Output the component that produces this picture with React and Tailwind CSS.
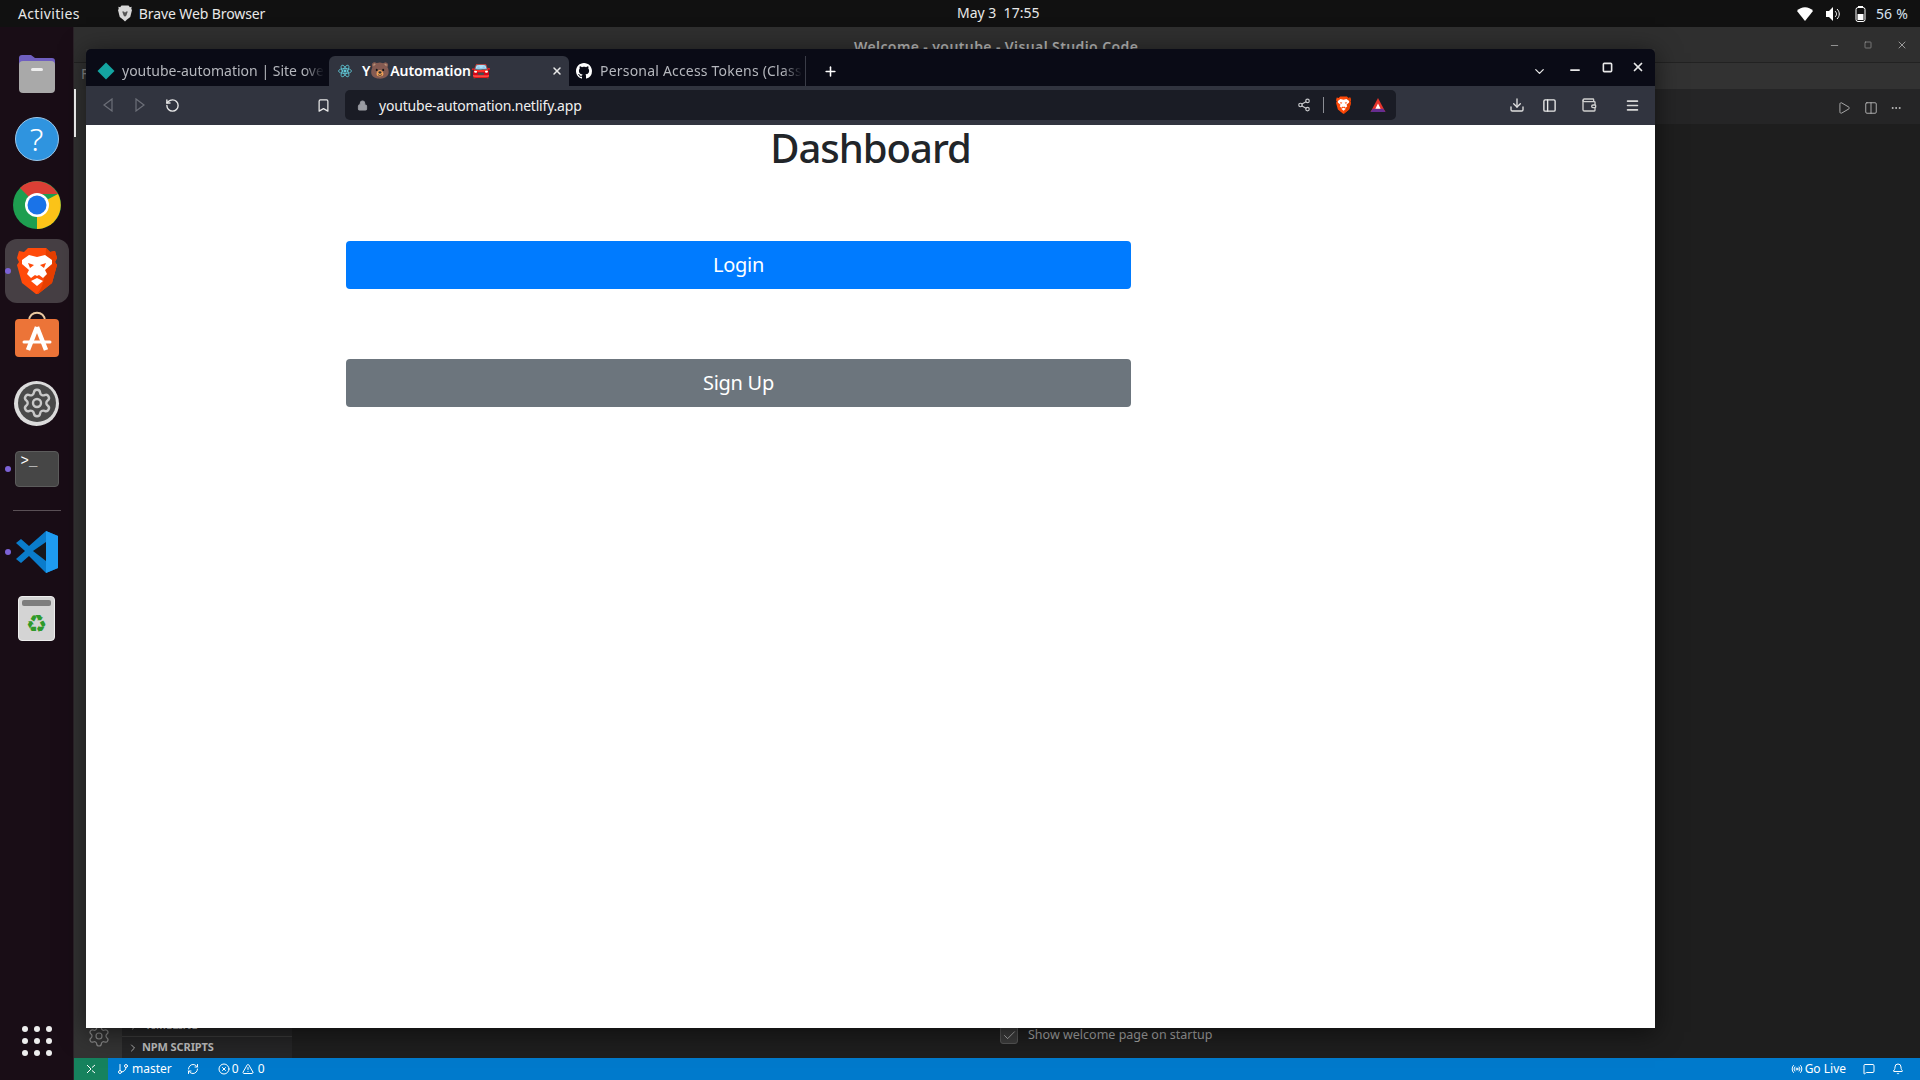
import React from "react";
import { ChevronDown, ChevronRight, Plus, X, Minus, Square, RotateCw, Bookmark, Lock, Share2, Download, PanelLeft, Wallet, Menu, Play, Columns2, Ellipsis, Settings, GitBranch, RefreshCw, CircleX, TriangleAlert, Radio, Bell, Check, MessageSquare } from "lucide-react";

const ui = "font-['Noto_Sans',sans-serif]";

function Folder() {
  return (
    <svg width="38" height="42" viewBox="0 0 38 42">
      <path d="M1 6a3 3 0 0 1 3-3h9l4 3h17a3 3 0 0 1 3 3v8H1z" fill="#6f5fc0" />
      <rect x="1" y="9" width="36" height="32" rx="4" fill="#a9a9a9" />
      <rect x="13" y="16" width="12" height="3" rx="1.5" fill="#eee" />
    </svg>
  );
}
function Help() {
  return (
    <div className="w-[44px] h-[44px] rounded-full bg-[#2f94df] flex items-center justify-center border border-[#9cc9ec] text-white text-[32px] font-['Noto_Sans',sans-serif] font-light leading-none">?</div>
  );
}
function Chrome() {
  return (
    <svg width="48" height="48" viewBox="0 0 48 48">
      <circle cx="24" cy="24" r="24" fill="#1e9e50" />
      <path d="M24 24 7 7A24 24 0 0 1 45 13H24z" fill="#db3f35" />
      <path d="M24 24h0L45 13A24 24 0 0 1 24 48z" fill="#fcc419" />
      <path d="M24 48 34 30 24 24z" fill="#fcc419" />
      <circle cx="24" cy="24" r="12" fill="#fff" />
      <circle cx="24" cy="24" r="9.5" fill="#1a73e8" />
    </svg>
  );
}
function BraveLion({ w = 40, h = 48 }) {
  return (
    <svg width={w} height={h} viewBox="0 0 40 48">
      <path d="M11 1H29L33 5 38 4 40 11 38 15 40 18 35 36 21 47H19L5 36 0 18 2 15 0 11 2 4 7 5Z" fill="#ff4a0a" />
      <path d="M29 1 33 5 38 4 40 11 38 15 40 18 35 36 21 47 H20 C30 36 28 20 29 1Z" fill="#e63f00" />
      <path d="M5 13 12 8 20 10 28 8 35 13 35 17 28 23 30 27 26 31 22 28 20 29 18 28 14 31 10 27 12 23 5 17Z" fill="#fff" />
      <path d="M11 16 17 18 13 21ZM29 16 23 18 27 21Z" fill="#ff4a0a" />
      <path d="M14 34 20 31 26 34 20 39Z" fill="#fff" />
    </svg>
  );
}
function Store() {
  return (
    <svg width="44" height="48" viewBox="0 0 44 48" className="-mt-[4px]">
      <path d="M14 10c0-11 16-11 16 0" fill="none" stroke="#e9c9a0" strokeWidth="2" />
      <rect x="0" y="8" width="44" height="38" rx="4" fill="#ec7438" />
      <path d="M22 16 13 39M22 16l9 23" stroke="#fff" strokeWidth="4.5" fill="none" />
      <path d="M9 31h26" stroke="#fff" strokeWidth="3" strokeLinecap="round" />
    </svg>
  );
}
function Gear() {
  return (
    <div className="w-[45px] h-[45px] rounded-full bg-[#dcdcdc] flex items-center justify-center">
      <div className="w-[38px] h-[38px] rounded-full bg-[#4a4a4a] flex items-center justify-center">
        <Settings size={32} color="#c9c9c9" strokeWidth={1.8} />
      </div>
    </div>
  );
}
function Terminal() {
  return (
    <div className="w-[44px] h-[36px] rounded-[4px] bg-[#464646] border border-[#5c5c5c] pl-[5px] pt-[1px] text-white text-[14px] leading-[16px] font-['Liberation_Mono',monospace]">&gt;_</div>
  );
}
function VSCode() {
  return (
    <svg width="42" height="42" viewBox="0 0 42 42">
      <path d="M30 0 42 5v32l-12 5L13 25 5 32 0 28l9-8-9-8 5-4 8 7z" fill="#0a7ccb" />
      <path d="M30 0 42 5v32l-12 5z" fill="#1f9cf0" />
      <path d="M30 11 17 20l13 10z" fill="#16171b" />
    </svg>
  );
}
function Trash() {
  return (
    <div className="w-[37px] h-[45px] rounded-[4px] bg-[#d4d4d4] border border-[#eee] flex flex-col items-center px-[3px] pt-[3px]">
      <div className="w-full h-[6px] rounded-[2px] bg-[#7d7d7d]" />
      <div className="mt-[6px] text-[#2f9a2a] text-[24px] leading-none font-['DejaVu_Sans',sans-serif]">♻</div>
    </div>
  );
}

function DockItem({ children, h, dot, active, className = "" }) {
  return (
    <div className={`relative w-[74px] flex items-center justify-center ${className}`} style={{ height: h }}>
      {dot && <span className="absolute left-[5px] top-1/2 -mt-[3px] w-[6px] h-[6px] rounded-full bg-[#7c62d6]" />}
      {active ? (
        <div className="w-[64px] h-[64px] rounded-[12px] bg-[#463f44] flex items-center justify-center">{children}</div>
      ) : children}
    </div>
  );
}

function Dock() {
  return (
    <div className="w-[74px] shrink-0 bg-[#190d16] flex flex-col items-center border-r border-[#2a2228] pt-[13px]">
      <DockItem h={66}><Folder /></DockItem>
      <DockItem h={66}><Help /></DockItem>
      <DockItem h={66}><Chrome /></DockItem>
      <DockItem h={66} dot active><BraveLion /></DockItem>
      <DockItem h={66}><Store /></DockItem>
      <DockItem h={66}><Gear /></DockItem>
      <DockItem h={66} dot><Terminal /></DockItem>
      <div className="w-[48px] h-px bg-[#5a5056] mt-[8px] mb-[8px]" />
      <DockItem h={66} dot><VSCode /></DockItem>
      <DockItem h={66}><Trash /></DockItem>
      <div className="flex-1" />
      <div className="grid grid-cols-3 gap-[6px] pb-[24px]">
        {Array.from({ length: 9 }).map((_, i) => (
          <span key={i} className="w-[6px] h-[6px] rounded-full bg-[#eeeeee]" />
        ))}
      </div>
    </div>
  );
}

function BraveMini() {
  return (
    <svg width="14" height="17" viewBox="0 0 40 48" className="block"><path d="M10 1h20l4 5 5-1-1 6 2 3-5 20-10 8-5 5-5-5-10-8L0 14l2-3-1-6 5 1z" fill="#d8d8d8" /><path d="M12 18h5l3 4 3-4h5l-4 12-4 3-4-3z" fill="#555" /></svg>
  );
}

function TopBar() {
  return (
    <div className={`h-[27px] shrink-0 bg-[#111111] text-[#e8e8e8] text-[14px] relative flex items-center ${ui}`}>
      <span className="ml-[18px] tracking-[0.35px]">Activities</span>
      <span className="ml-[38px] mr-[7px] text-[#ddd]"><BraveMini /></span>
      <span className="tracking-[-0.1px]">Brave Web Browser</span>
      <span className="absolute left-[957px] top-[3px] leading-[20px]">May 3&nbsp;&nbsp;17:55</span>
      <div className="ml-auto flex items-center pr-[12px] gap-[8px]">
        <svg width="16" height="14" viewBox="0 0 16 14"><path d="M0 4c4-5 12-5 16 0l-8 10z" fill="#fff" /></svg>
        <svg width="16" height="14" viewBox="0 0 16 14" className="ml-[4px]"><path d="M1 4h3l4-4v14l-4-4H1z" fill="#fff" /><path d="M10 4c2 2 2 4 0 6M12 2c3 3 3 7 0 10" stroke="#fff" fill="none" /></svg>
        <svg width="12" height="16" viewBox="0 0 12 16" className="ml-[6px]"><rect x="3" y="0" width="5" height="2" fill="#fff" /><rect x="1" y="1.5" width="9" height="14" rx="2" fill="none" stroke="#fff" /><rect x="2.5" y="8" width="6" height="6" fill="#fff" /></svg>
        <span className="text-[14px] tracking-[0.2px] text-[#d8e4f0] ml-[1px]">56 %</span>
      </div>
    </div>
  );
}

function BrowserWindow() {
  return (
    <div className={`absolute left-[86px] top-[49px] w-[1569px] h-[979px] flex flex-col shadow-[0_4px_24px_rgba(0,0,0,0.55)] ${ui}`}>
      <div className="h-[37px] shrink-0 bg-[#0a0b16] rounded-t-[5px] flex items-end relative pr-[10px]">
        <div className="w-[243px] h-[30px] flex items-center pl-[14px] pb-[1px] shrink-0 whitespace-nowrap text-[14px] text-[#b5b7bd]">
          <span className="w-[12px] h-[12px] rotate-45 bg-[#14a5a2] mr-[10px] shrink-0" />
          <span className="[mask-image:linear-gradient(to_right,#000_90%,transparent)]">youtube-automation | Site ove</span>
        </div>
        <div className="h-[30px] flex items-center shrink-0 bg-[#31343f] rounded-t-[6px] w-[240px] pl-[9px] pr-[6px] pb-[1px] text-white text-[14px]">
          <span className="w-[14px] h-[14px] mr-[10px] flex items-center justify-center">
            <svg width="14" height="14" viewBox="0 0 14 14" fill="none" stroke="#61c9d8" strokeWidth="0.8"><ellipse cx="7" cy="7" rx="6.5" ry="2.5" /><ellipse cx="7" cy="7" rx="6.5" ry="2.5" transform="rotate(60 7 7)" /><ellipse cx="7" cy="7" rx="6.5" ry="2.5" transform="rotate(120 7 7)" /><circle cx="7" cy="7" r="1.2" fill="#61c9d8" /></svg>
          </span>
          <span className="font-semibold whitespace-nowrap tracking-[-0.1px]">Y<span className="text-[16px] leading-[14px]">🐻</span>Automation<span className="text-[16px] leading-[14px]">🚘</span></span>
          <X size={12} strokeWidth={3} color="#e8e8e8" className="ml-auto" />
        </div>
        <div className="w-[237px] h-[30px] shrink-0 flex items-center pl-[7px] pb-[1px] text-[14px] text-[#b5b7bd] whitespace-nowrap border-r border-[#3a3c47] relative">
          <svg width="16" height="16" viewBox="0 0 16 16" className="mr-[8px] shrink-0" fill="#fff"><path d="M8 0C3.58 0 0 3.58 0 8c0 3.54 2.29 6.53 5.47 7.59.4.07.55-.17.55-.38 0-.19-.01-.82-.01-1.49-2.01.37-2.53-.49-2.69-.94-.09-.23-.48-.94-.82-1.13-.28-.15-.68-.52-.01-.53.63-.01 1.08.58 1.23.82.72 1.21 1.87.87 2.33.66.07-.52.28-.87.51-1.07-1.78-.2-3.64-.89-3.64-3.95 0-.87.31-1.59.82-2.15-.08-.2-.36-1.02.08-2.12 0 0 .67-.21 2.2.82.64-.18 1.32-.27 2-.27s1.36.09 2 .27c1.53-1.04 2.2-.82 2.2-.82.44 1.1.16 1.92.08 2.12.51.56.82 1.27.82 2.15 0 3.07-1.87 3.75-3.65 3.95.29.25.54.73.54 1.48 0 1.07-.01 1.93-.01 2.2 0 .21.15.46.55.38A8.01 8.01 0 0 0 16 8c0-4.42-3.58-8-8-8z" /></svg>
          <span className="tracking-[0.2px] [mask-image:linear-gradient(to_right,#000_90%,transparent)]">Personal Access Tokens (Class</span>
        </div>
        <Plus size={15} strokeWidth={2.5} color="#fff" className="ml-[17px] mb-[7px]" />
        <div className="ml-auto h-full flex items-center text-[#e8e8e8]">
          <ChevronDown size={15} strokeWidth={2} className="mt-[8px]" />
          <Minus size={14} strokeWidth={3} className="ml-[21px] mt-[5px]" />
          <Square size={11} strokeWidth={3.5} className="ml-[20px] -mt-[1px]" />
          <X size={14} strokeWidth={3} className="ml-[18px] -mt-[1px]" />
        </div>
      </div>
      <div className="h-[39px] shrink-0 bg-[#31343f] flex items-center pb-[1px] text-[#d8d9dc]">
        <svg width="12" height="14" viewBox="0 0 12 14" className="ml-[16px]" fill="none" stroke="#6c6f78" strokeWidth="1.2"><path d="M10 1 2 7l8 6z" /></svg>
        <svg width="12" height="14" viewBox="0 0 12 14" className="ml-[20px]" fill="none" stroke="#6c6f78" strokeWidth="1.2"><path d="M2 1l8 6-8 6z" /></svg>
        <RotateCw size={15} strokeWidth={2.2} className="ml-[19px] -scale-x-100" color="#e8e8e8" />
        <Bookmark size={15} strokeWidth={2} className="ml-[136px]" color="#e8e8e8" />
        <div className="ml-[14px] w-[1051px] h-[30px] rounded-[5px] bg-[#1a1c25] flex items-center text-[14px] text-[#f0f0f0] pl-[12px] pr-[9px]">
          <Lock size={11} fill="#9a9ca3" color="#9a9ca3" strokeWidth={2} />
          <span className="ml-[11px] tracking-[-0.2px]">youtube-automation.netlify.app</span>
          <Share2 size={14} className="ml-auto" color="#c8c9cc" />
          <span className="w-px h-[16px] bg-[#8b8d94] ml-[12px] mr-[12px]" />
          <BraveLion w={15} h={18} />
          <svg width="18" height="17" viewBox="0 0 16 16" className="ml-[18px]"><path d="M8 1 15 14H1z" fill="#e7342c" /><path d="M1 14h14l-2-3H3z" fill="#662d91" /><path d="M8 6l2.5 5h-5z" fill="#fff" /></svg>
        </div>
        <Download size={16} className="ml-[113px]" color="#e0e0e0" />
        <PanelLeft size={15} className="ml-[17px]" color="#e8e8e8" strokeWidth={2.2} />
        <Wallet size={16} className="ml-[24px]" color="#d0d0d0" />
        <Menu size={15} className="ml-[28px]" color="#d8d8d8" strokeWidth={2.5} />
      </div>
      <div className="flex-1 bg-white flex flex-col">
        <h1 className="text-center text-[40px] leading-[48px] font-medium tracking-[-1px] text-[#212529] -mt-px mb-[69px]">Dashboard</h1>
        <div className="ml-[260px] w-[785px] flex flex-col gap-[70px]">
          <button className="h-[48px] rounded-[4px] bg-[#007bff] text-white text-[20px] tracking-[-0.3px]">Login</button>
          <button className="h-[48px] rounded-[4px] bg-[#6c757d] text-white text-[20px] tracking-[-0.3px]">Sign Up</button>
        </div>
      </div>
    </div>
  );
}

function VSWindow() {
  return (
    <div className={`flex-1 flex flex-col min-w-0 bg-[#1e1e1e] ${ui}`}>
      <div className="h-[36px] shrink-0 bg-[#2f2f2f] border-b border-[#222] flex items-start relative">
        <span className="absolute left-[780px] top-[9px] text-[14px] font-semibold tracking-[0.4px] text-[#b4b4b4]">Welcome - youtube - Visual Studio Code</span>
        <div className="ml-auto flex items-center gap-[24px] pr-[12px] pt-[12px] text-[#9b9b9b]">
          <Minus size={11} />
          <Square size={8} />
          <X size={12} />
        </div>
      </div>
      <div className="h-[26px] shrink-0 bg-[#323232] text-[#8a8a8a] text-[14px] pl-[7px]">F</div>
      <div className="flex-1 flex min-h-0">
        <div className="relative w-[48px] shrink-0 bg-[#333333] flex flex-col justify-end items-center pb-[10px] pl-[1px]">
          <span className="absolute left-0 top-0 w-[2px] h-[48px] bg-white" />
          <Settings size={24} strokeWidth={1.2} color="#858585" />
        </div>
        <div className="w-[170px] shrink-0 bg-[#252526] flex flex-col justify-end">
          <div className="h-[22px] flex items-center text-[11px] font-bold text-[#bbbbbb] border-t border-[#3a3a3a] pl-[6px]">
            <ChevronRight size={12} className="mr-[5px]" color="#b0b0b0" />TIMELINE
          </div>
          <div className="h-[22px] flex items-center text-[11px] font-bold tracking-[-0.1px] text-[#bbbbbb] border-t border-[#3a3a3a] pl-[5px]">
            <ChevronRight size={12} className="mr-[3px]" color="#b0b0b0" />NPM SCRIPTS
          </div>
        </div>
        <div className="flex-1 bg-[#1e1e1e] flex flex-col justify-end">
          <div className="h-[35px] shrink-0 bg-[#252526] flex items-center justify-end pr-[18px] pt-[2px] text-[#c5c5c5]">
            <Play size={14} strokeWidth={1.4} />
            <Columns2 size={14} strokeWidth={1.4} className="ml-[13px]" />
            <Ellipsis size={12} className="ml-[12px]" />
          </div>
          <div className="flex-1" />
          <div className="h-[32px] flex items-start text-[12.5px] text-[#a3a3a3] pl-[708px]">
            <span className="w-[18px] h-[18px] rounded-[3px] bg-[#3c3c3c] border border-[#555] flex items-center justify-center">
              <Check size={15} strokeWidth={1.2} color="#d0d0d0" />
            </span>
            <span className="ml-[10px] leading-[18px]">Show welcome page on startup</span>
          </div>
        </div>
      </div>
      <div className="h-[22px] shrink-0 bg-[#007acc] flex items-center text-[12px] text-white">
        <div className="w-[34px] h-full bg-[#16825d] flex items-center justify-center">
          <svg width="10" height="10" viewBox="0 0 10 10" fill="none" stroke="#fff"><path d="M1 1l4 4-4 4M9 1 6 3.5M6 6.5 9 9" /></svg>
        </div>
        <GitBranch size={12} className="ml-[9px]" />
        <span className="ml-[3px]">master</span>
        <RefreshCw size={12} className="ml-[15px]" />
        <CircleX size={12} className="ml-[19px]" />
        <span className="ml-[2px]">0</span>
        <TriangleAlert size={12} className="ml-[3px]" />
        <span className="ml-[4px]">0</span>
        <div className="ml-auto flex items-center pr-[16px]">
          <Radio size={12} />
          <span className="ml-[2px]">Go Live</span>
          <MessageSquare size={12} className="ml-[17px]" />
          <Bell size={12} className="ml-[17px]" />
        </div>
      </div>
    </div>
  );
}

export default function App() {
  return (
    <div className="relative w-[1920px] h-[1080px] overflow-hidden flex flex-col bg-[#1e1e1e]">
      <TopBar />
      <div className="flex-1 flex min-h-0">
        <Dock />
        <VSWindow />
      </div>
      <BrowserWindow />
    </div>
  );
}
